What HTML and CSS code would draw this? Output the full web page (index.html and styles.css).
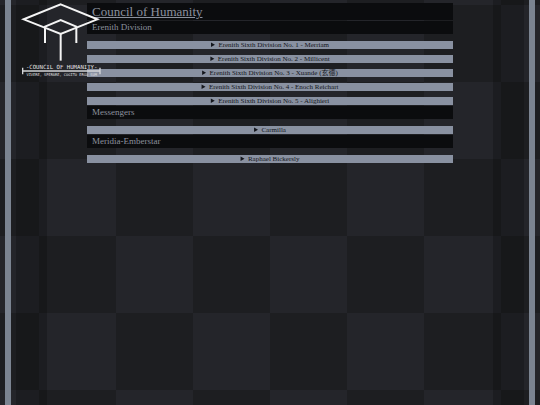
FILE: index.html
```html
<!DOCTYPE html>
<html lang="en">
<head>
    <meta charset="UTF-8">
    <meta name="viewport" content="width=device-width, initial-scale=1.0">
    <title>Council of Humanity</title>
    <link rel="stylesheet" href="styles.css">
</head>
<body>
    <div class="frame">
        <div class="shade"></div>
        <main class="content">
            <h1>Council of Humanity</h1>
            <section>
                <h2>Erenith Division</h2>
                <div class="members">
                    <details><summary>Erenith Sixth Division No. 1 - Merriam</summary></details>
                    <details><summary>Erenith Sixth Division No. 2 - Millicent</summary></details>
                    <details><summary>Erenith Sixth Division No. 3 - Xuande (玄德)</summary></details>
                    <details><summary>Erenith Sixth Division No. 4 - Enoch Reichart</summary></details>
                    <details><summary>Erenith Sixth Division No. 5 - Alighieri</summary></details>
                </div>
            </section>
            <section>
                <h2>Messengers</h2>
                <div class="members">
                    <details><summary>Carmilla</summary></details>
                </div>
            </section>
            <section>
                <h2>Meridia-Emberstar</h2>
                <div class="members">
                    <details><summary>Raphael Bickersly</summary></details>
                </div>
            </section>
        </main>
        <div class="shade"></div>
    </div>
    <svg class="logo" viewBox="60 0 252 240">
        <g class="cube">
            <path d="M182 13 L292 58 L182 102 L71 58 Z"></path>
            <path d="M135 129 V80 L182 60 L229 80 V129"></path>
            <path d="M182 102 V182"></path>
        </g>
        <path class="rule" d="M68 213 H300 M68 203 V223 M300 203 V223"></path>
        <text class="name" x="185" y="208">-COUNCIL OF HUMANITY-</text>
        <text class="motto" x="185" y="227">VIVERE, SPERARE, COGITO ERGO SUM</text>
    </svg>
</body>
</html>
```

FILE: styles.css
```css
body {
    margin: 0;
    font-family: "Liberation Serif", "Noto Sans CJK SC", serif;
    color: #8b919e;
    background: repeating-conic-gradient(#1d1e21 0 25%, #24252a 0 50%) 39px 5px / 154px 154px;
}
.frame {
    display: flex;
    justify-content: space-between;
    min-height: 100vh;
    box-sizing: border-box;
    margin: 0 5px;
    padding: 0 5px;
    border: solid #7b8491;
    border-width: 0 6px;
}
.shade {
    width: 31px;
    background: rgba(0, 0, 0, 0.2);
}
.content {
    flex: 1;
    margin: 3px 40px 0;
}
h1, h2 {
    margin: 0;
    padding: 0 5px;
    font-weight: normal;
    background: #0b0c0e;
}
h1 {
    margin-bottom: 1px;
    font-size: 13px;
    line-height: 17px;
    text-decoration: underline;
}
h2 {
    font-size: 9px;
    line-height: 13px;
}
.members {
    display: flex;
    flex-direction: column;
    gap: 6px;
    padding: 7px 0 1px;
}
summary {
    height: 8px;
    font-size: 7px;
    line-height: 8px;
    text-align: center;
    color: #14161c;
    background: #8991a1;
    cursor: pointer;
}
.logo {
    position: absolute;
    top: 0;
    left: 20px;
    width: 84px;
    height: 80px;
}
.cube, .rule {
    fill: none;
    stroke: #f4f4f4;
    stroke-width: 6;
}
.rule {
    stroke: #d4d5d8;
    stroke-width: 4;
}
.name, .motto {
    font-family: "DejaVu Sans Mono", monospace;
    text-anchor: middle;
    fill: #e4e4e6;
}
.name {
    font-size: 17px;
}
.motto {
    font-size: 11px;
}
```
